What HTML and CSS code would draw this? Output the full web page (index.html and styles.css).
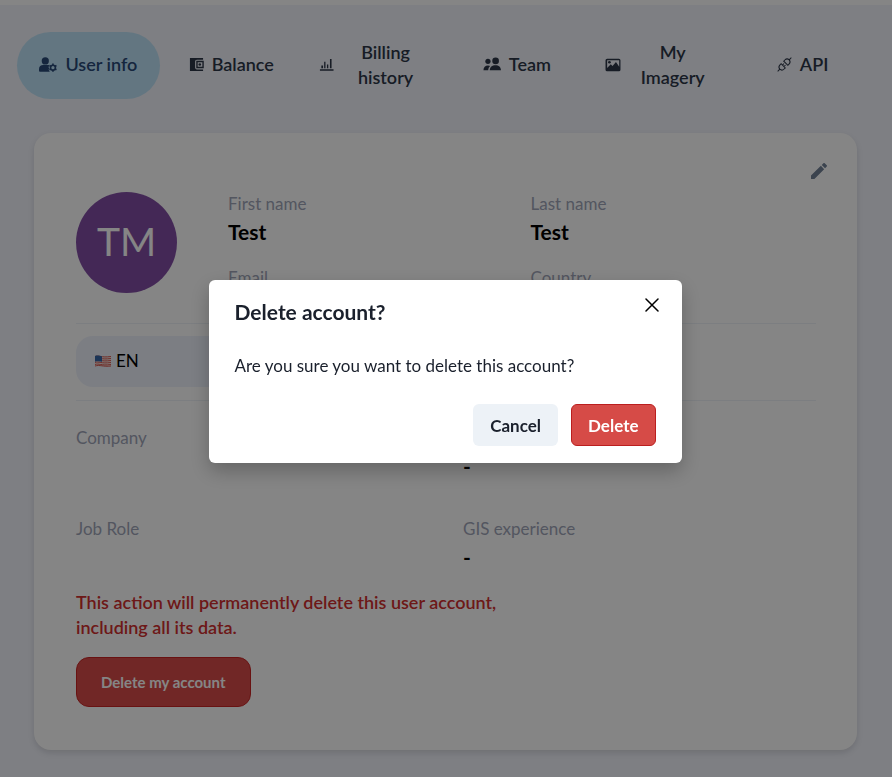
FILE: index.html
```
<!DOCTYPE html>
<html lang="en">
<head>
<meta charset="utf-8">
<meta name="viewport" content="width=device-width, initial-scale=1">
<title>Account</title>
<link rel="stylesheet" href="styles.css">
</head>
<body>
<main class="page">
  <nav class="tabs" role="tablist" aria-label="Account sections">
    <button class="tab tab-active" type="button" role="tab" aria-selected="true">
      <svg class="icon icon-wide" viewBox="0 0 20 16" aria-hidden="true"><circle cx="7" cy="4" r="4" fill="currentColor"/><path fill="currentColor" d="M0 15v-2c0-3 2-4.500 4.500-4.500h5c.8 0 1.300.1 1.900.4L10.600 11l.8 1.500-.7 1.300L12 16H1c-.6 0-1-.4-1-1z"/><circle cx="15.500" cy="11.500" r="2.700" fill="none" stroke="currentColor" stroke-width="1.800"/><path stroke="currentColor" stroke-width="1.800" d="M15.500 9V7M15.500 14v2M17.500 10.200l1.900-1M13.500 10.200l-1.900-1M17.500 12.800l1.900 1M13.500 12.800l-1.900 1"/></svg>
      <span class="tab-label">User info</span>
    </button>
    <button class="tab" type="button" role="tab" aria-selected="false">
      <svg class="icon" viewBox="0 0 16 16" aria-hidden="true"><path fill="currentColor" d="M1 1h14v1.800H8.500c-1.200 0-2 .8-2 2v6.400c0 1.200.8 2 2 2H15V15H1z"/><path fill="none" stroke="currentColor" stroke-width="1.500" d="M8.500 4.800h6.500v6.400H8.500z"/><circle cx="11.500" cy="8" r="1.400" fill="currentColor"/></svg>
      <span class="tab-label">Balance</span>
    </button>
    <button class="tab" type="button" role="tab" aria-selected="false">
      <svg class="icon" viewBox="0 0 16 16" aria-hidden="true"><path fill="currentColor" d="M1 13h14.500v1.600H1zM2.500 9h1.800v3H2.500zM5.500 5h1.400v7H5.500zM8.500 8h1.400v4H8.500zM11.700 2h1.700v10h-1.700z"/></svg>
      <span class="tab-label tab-label-fill">Billing history</span>
    </button>
    <button class="tab" type="button" role="tab" aria-selected="false">
      <svg class="icon icon-wide" viewBox="0 0 20 16" aria-hidden="true"><g fill="currentColor"><circle cx="5.500" cy="4.500" r="2.900"/><circle cx="14" cy="4" r="3.700"/><path d="M.5 14.500c0-3.500 2-5.500 5-5.500 1 0 1.800.2 2.600.6-1.500 1.200-2.200 2.700-2.300 4.900zM7.500 14.500c0-3.600 2.600-5.600 6.300-5.600s6.200 2 6.200 5.600z"/></g></svg>
      <span class="tab-label">Team</span>
    </button>
    <button class="tab" type="button" role="tab" aria-selected="false">
      <svg class="icon icon-wide" viewBox="0 0 20 16" aria-hidden="true"><path fill="currentColor" fill-rule="evenodd" d="M3.500 1.500h13A1.800 1.800 0 0 1 18.300 3.300v10.400a1.800 1.800 0 0 1-1.800 1.800h-13a1.800 1.800 0 0 1-1.800-1.800V3.300a1.800 1.800 0 0 1 1.800-1.800zM3.500 12l4-4.300 2 2 3.800-4.500 3.600 5.300V3.300H3.500z"/><circle cx="6" cy="5.500" r="1.500" fill="currentColor"/></svg>
      <span class="tab-label tab-label-fill">My Imagery</span>
    </button>
    <button class="tab" type="button" role="tab" aria-selected="false">
      <svg class="icon" viewBox="0 0 16 16" aria-hidden="true"><g fill="none" stroke="currentColor" stroke-width="1.100" stroke-linecap="round"><path d="M1 15l2-2M13 3l2-2M3 13c-1.300-1.500-1.200-3.200.2-4.600l1.200-1.200 4.400 4.400-1.200 1.200C6.200 14.200 4.500 14.300 3 13zM13 3c1.300 1.500 1.200 3.200-.2 4.600l-1.200 1.200-4.400-4.400 1.200-1.200C9.800 1.800 11.500 1.700 13 3zM5.800 8.600l1.400-1.400M7.400 10.200l1.400-1.400"/></g></svg>
      <span class="tab-label">API</span>
    </button>
  </nav>

  <section class="card" aria-label="User info">
    <div class="card-header">
      <button class="edit" type="button" aria-label="Edit profile">
        <svg class="edit-icon" viewBox="0 0 18 18" aria-hidden="true"><path fill="currentColor" d="M0 14.200V18h3.800L14.800 6.900 11.100 3.200zM17.700 4c.4-.4.4-1 0-1.400L15.400.3c-.4-.4-1-.4-1.400 0l-1.900 1.900 3.700 3.700z"/></svg>
      </button>
    </div>
    <div class="card-body">
      <div class="profile">
        <div class="avatar">TM</div>
        <dl class="fields">
          <div><dt>First name</dt><dd>Test</dd></div>
          <div><dt>Last name</dt><dd>Test</dd></div>
          <div><dt>Email</dt><dd></dd></div>
          <div><dt>Country</dt><dd></dd></div>
        </dl>
      </div>
      <div class="language-row">
        <div class="language">
          <svg class="flag" viewBox="0 0 16 12" aria-hidden="true"><path fill="#f3e9e7" d="M0 1c4-1.500 6 1.500 16 0v10c-6 1.500-10-1.500-16 0z"/><path fill="none" stroke="#d8584f" d="M0 1.500c4-1.500 6 1.500 16 0M0 3.500c4-1.500 6 1.500 16 0M0 5.500c4-1.500 6 1.500 16 0M0 7.500c4-1.500 6 1.500 16 0M0 9.500c4-1.500 6 1.500 16 0M0 11c5-1.500 8 1 16 0"/><path fill="#3766a8" d="M0 1c3-1 5 0 7 .4v5.400C5 6.400 3 6 0 6.700z"/></svg>
          <select class="language-select" aria-label="Language"><option>EN</option></select>
        </div>
      </div>
      <dl class="details">
        <div><dt>Company</dt><dd></dd></div>
        <div><dt></dt><dd>-</dd></div>
        <div><dt>Job Role</dt><dd></dd></div>
        <div><dt>GIS experience</dt><dd>-</dd></div>
      </dl>
      <p class="warning">This action will permanently delete this user account, including all its data.</p>
      <button class="delete-account" type="button">Delete my account</button>
    </div>
  </section>
</main>

<div class="overlay">
  <div class="modal" role="dialog" aria-modal="true" aria-labelledby="modal-title">
    <header class="modal-header">
      <h2 class="modal-title" id="modal-title">Delete account?</h2>
      <button class="close" type="button" aria-label="Close">
        <svg class="close-icon" viewBox="0 0 14 14" aria-hidden="true"><path d="M1 1l12 12M13 1L1 13" fill="none" stroke="currentColor" stroke-width="1.500" stroke-linecap="round"/></svg>
      </button>
    </header>
    <p class="modal-text">Are you sure you want to delete this account?</p>
    <footer class="modal-actions">
      <button class="button" type="button">Cancel</button>
      <button class="button button-danger" type="button">Delete</button>
    </footer>
  </div>
</div>
</body>
</html>
```
FILE: styles.css
```
* { box-sizing: border-box; }

body {
  margin: 0;
  min-height: 100vh;
  background: #f1f3fb;
  color: #000;
  font-family: Lato, "Liberation Sans", sans-serif;
  font-size: 17px;
  line-height: 25px;
}

button, select { font: inherit; color: inherit; border: 0; background: none; padding: 0; }
button { cursor: pointer; }
dl, dd, p, h2 { margin: 0; }

.page {
  padding: 27px 18px 26px 17px;
  border-top: 5px solid #fff;
}

.tabs {
  display: grid;
  grid-template-columns: repeat(6, 1fr);
}

.tab {
  display: flex;
  align-items: center;
  justify-content: center;
  gap: 8px;
  min-height: 67px;
  padding: 7px 16px 9px;
  border-radius: 34px;
  color: #2d3748;
  font-size: 18px;
  font-weight: 600;
}

.tab-active { background: #bee3f8; color: #2a4a78; }
.tab-label-fill { flex: 1; }
.icon { width: 15px; height: 15px; flex: none; }
.icon-wide { width: 18px; }

.card {
  margin: 34px 17px 0;
  border-radius: 17px;
  background: #fff;
  box-shadow: 0 3px 6px rgba(0, 0, 0, 0.12);
}

.card-header {
  display: flex;
  justify-content: flex-end;
  padding: 30px 30px 0;
}

.edit { display: flex; color: #718096; }
.edit-icon { width: 16px; height: 16px; }
.card-body { padding: 12px 41px 43px 42px; }

.profile {
  display: flex;
  align-items: flex-start;
  gap: 51px;
  padding-bottom: 1px;
  border-bottom: 1px solid #edf2f7;
}

.avatar {
  display: flex;
  align-items: center;
  justify-content: center;
  flex: none;
  width: 101px;
  height: 101px;
  margin-top: 1px;
  border-radius: 50%;
  background: #824ea5;
  color: #fff;
  font-size: 39px;
  line-height: 1;
  padding-bottom: 2px;
}

.fields {
  display: grid;
  flex: 1;
  grid-template-columns: 1fr 1fr;
  gap: 17px;
}

dt { min-height: 25px; color: #a0a5b8; }
dd { min-height: 32px; font-size: 21px; font-weight: 700; line-height: 32px; }

.language-row {
  padding: 12px 0 13px;
  border-bottom: 1px solid #edf2f7;
}

.language {
  display: flex;
  align-items: center;
  gap: 5px;
  width: 50%;
  height: 51px;
  padding: 0 17px 2px 19px;
  border-radius: 17px;
  background: #edf2fc;
}

.flag { width: 16px; height: 12px; flex: none; }
.language-select { flex: 1; appearance: none; outline: 0; }

.details {
  display: grid;
  grid-template-columns: 1fr 1fr;
  gap: 34px;
  padding-top: 24px;
}

.warning {
  max-width: 440px;
  padding: 17px 0;
  color: #d22f2f;
  font-size: 18px;
  font-weight: 600;
}

.delete-account {
  height: 50px;
  padding: 0 24px;
  border: 1px solid #c92424;
  border-radius: 13px;
  background: #d94c4a;
  color: #fff;
  font-size: 15px;
  font-weight: 700;
}

.overlay {
  position: fixed;
  inset: 0;
  display: flex;
  align-items: center;
  justify-content: center;
  padding: 0 18px 34px 16px;
  background: rgba(0, 0, 0, 0.48);
}

.modal {
  width: 100%;
  max-width: 473px;
  padding: 16px 26px 17px;
  border-radius: 6px;
  background: #fff;
  color: #1a202c;
  box-shadow: 0 8px 20px rgba(0, 0, 0, 0.25);
}

.modal-header {
  display: flex;
  align-items: flex-start;
  justify-content: space-between;
  margin-right: -3px;
}

.modal-title { font-size: 21px; font-weight: 700; line-height: 32px; }
.close { display: flex; padding-top: 2px; color: #000; }
.close-icon { width: 14px; height: 14px; }
.modal-text { padding: 25px 0 26px; }
.modal-actions { display: flex; justify-content: flex-end; gap: 13px; }

.button {
  height: 42px;
  padding: 0 17px;
  border-radius: 6px;
  background: #edf2f7;
  font-weight: 700;
}

.button-danger {
  border: 1px solid #bb1f1f;
  background: #d64b47;
  color: #fff;
  padding: 0 16px;
}
```
